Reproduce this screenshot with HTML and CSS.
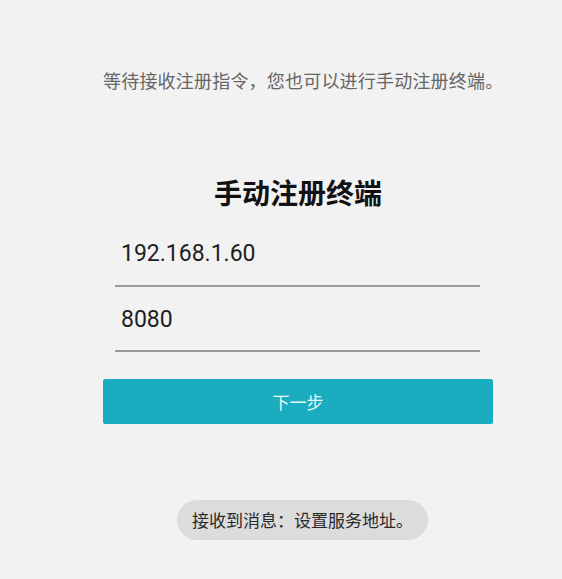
FILE: index.html
```html
<!DOCTYPE html>
<html lang="zh-CN">
<head>
<meta charset="utf-8">
<title>手动注册终端</title>
<link rel="stylesheet" href="styles.css">
</head>
<body>
<div class="page">
  <p class="hint">等待接收注册指令，您也可以进行手动注册终端。</p>
  <h1 class="title">手动注册终端</h1>
  <div class="field">
    <div class="field-value">192.168.1.60</div>
    <div class="field-line"></div>
  </div>
  <div class="field field-second">
    <div class="field-value">8080</div>
    <div class="field-line"></div>
  </div>
  <button class="next-btn">下一步</button>
  <div class="toast">接收到消息：设置服务地址。</div>
</div>
</body>
</html>
```
FILE: styles.css
```css
html, body {
  margin: 0;
  padding: 0;
  background: #f2f2f2;
}
body {
  font-family: Roboto, "Noto Sans CJK SC", sans-serif;
  height: 579px;
  overflow: hidden;
}
.page {
  display: flex;
  flex-direction: column;
  width: 390px;
  margin-left: 103px;
  padding-top: 68px;
}
.hint {
  margin: 0;
  font-size: 18px;
  line-height: 24px;
  letter-spacing: 0.2px;
  color: #666;
  text-align: center;
  white-space: nowrap;
  font-family: "Noto Sans CJK SC", sans-serif;
}
.title {
  margin: 82px 0 0;
  font-size: 28px;
  line-height: 36px;
  font-weight: 700;
  color: #111;
  text-align: center;
  font-family: "Noto Sans CJK SC", sans-serif;
}
.field {
  margin: 28px 13px 0 12px;
}
.field-second {
  margin-top: 17px;
}
.field-value {
  padding-left: 6px;
  font-size: 23px;
  line-height: 32px;
  color: #1e1e1e;
}
.field-line {
  margin-top: 15px;
  height: 2px;
  background: #9a9a9a;
}
.field-second .field-line {
  margin-top: 14px;
}
.next-btn {
  margin-top: 27px;
  height: 45px;
  border: none;
  border-radius: 2px;
  background: #1aadc0;
  color: #e8f8fa;
  font-size: 17px;
  font-family: "Noto Sans CJK SC", sans-serif;
  padding: 0;
}
.toast {
  align-self: flex-start;
  margin: 76px 0 0 74px;
  height: 40px;
  line-height: 40px;
  padding: 0 15px;
  border-radius: 20px;
  background: #dcdcdc;
  color: #2a2a2a;
  font-size: 17px;
  white-space: nowrap;
  font-family: "Noto Sans CJK SC", sans-serif;
}
```
